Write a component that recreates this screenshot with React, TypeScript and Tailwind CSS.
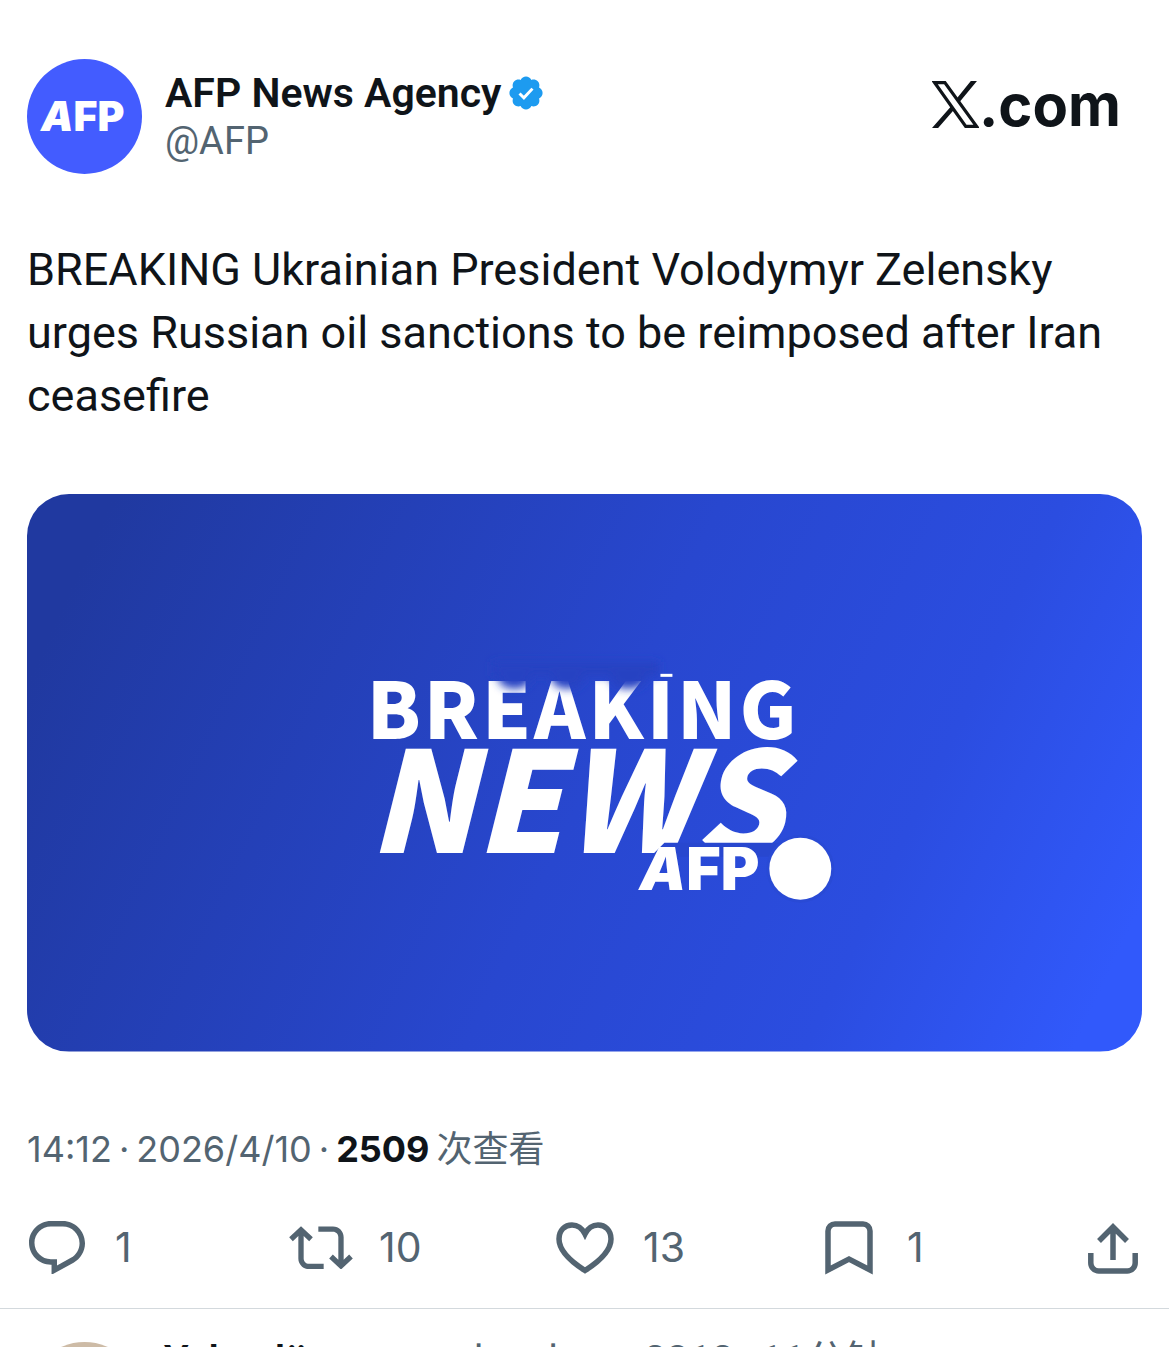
import { ReactNode } from "react";

interface ActionProps {
  label: string;
  count?: string;
  children: ReactNode;
}

export default function App() {
  return (
    <main className="h-screen overflow-hidden bg-white font-['Roboto','Noto_Sans_CJK_SC',sans-serif] text-[#0f1419]">
      <article className="border-b border-[#d3d9dd] pb-7">
        <div className="px-[27px]">
          <PostHeader />
          <p className="mt-16 text-[45px] leading-[63px]">
            BREAKING Ukrainian President Volodymyr Zelensky urges Russian oil
            sanctions to be reimposed after Iran ceasefire
          </p>
          <BreakingCard />
          <PostMeta />
        </div>
        <PostActions />
      </article>
      <Reply />
    </main>
  );
}

function PostHeader() {
  return (
    <header className="flex items-center pt-[59px]">
      <svg
        viewBox="0 0 115 115"
        className="w-[115px] shrink-0 font-['Inter',sans-serif]"
        role="img"
        aria-label="AFP"
      >
        <circle cx="57.5" cy="57.5" r="57.5" fill="#435cff" />
        <text x="14" y="72" fontSize="41" fontWeight="900" fill="#fff">
          <tspan fontStyle="italic">A</tspan>FP
        </text>
      </svg>
      <div className="ml-[23px] leading-[48px]">
        <div className="flex items-center gap-2">
          <h1 className="text-[41px] font-semibold">AFP News Agency</h1>
          <VerifiedBadge />
        </div>
        <div className="text-[38px] text-[#536471]">@AFP</div>
      </div>
      <a
        href="#"
        className="mr-[21px] ml-auto -mt-6 flex items-center font-['Inter',sans-serif] text-[58px] leading-[60px] font-bold"
      >
        <svg viewBox="0 0 46 46" className="w-[47px]" aria-label="X">
          <path
            d="M2.6 1.6h10l31 42.8H33z"
            fill="none"
            stroke="currentColor"
            strokeWidth="3.2"
          />
          <path
            d="M38 0h6L27 20.500l-2.600-3.500zM18.500 25l2.600 3.700L6 46H0z"
            fill="currentColor"
          />
        </svg>
        .com
      </a>
    </header>
  );
}

function VerifiedBadge() {
  return (
    <svg viewBox="1.5 1.500 21 21" className="w-[34px]" aria-label="Verified">
      <path
        fill="#1d9bf0"
        d="M22.250 12c0-1.430-.88-2.670-2.190-3.340.46-1.390.2-2.900-.81-3.910s-2.520-1.270-3.910-.81c-.66-1.310-1.910-2.190-3.340-2.190s-2.670.88-3.330 2.190c-1.400-.46-2.910-.2-3.920.81s-1.260 2.520-.8 3.910c-1.310.67-2.200 1.910-2.200 3.340s.89 2.670 2.200 3.340c-.46 1.390-.21 2.900.8 3.910s2.520 1.260 3.910.81c.67 1.310 1.910 2.190 3.340 2.190s2.680-.88 3.340-2.190c1.390.45 2.900.2 3.910-.81s1.270-2.520.81-3.910c1.310-.67 2.190-1.910 2.190-3.340z"
      />
      <path
        d="M8 12.300l2.700 2.700 5.300-5.700"
        fill="none"
        stroke="#fff"
        strokeWidth="1.8"
      />
    </svg>
  );
}

function BreakingCard() {
  return (
    <svg
      viewBox="0 0 1116 558"
      className="mt-[67px] w-full rounded-[42px] font-['Noto_Sans_CJK_SC',sans-serif]"
      role="img"
      aria-label="Breaking news AFP"
    >
      <defs>
        <linearGradient
          id="card"
          gradientUnits="userSpaceOnUse"
          x1="60"
          y1="60"
          x2="1060"
          y2="530"
        >
          <stop offset="0" stopColor="#2039a0" />
          <stop offset="0.5" stopColor="#2847cf" />
          <stop offset="0.78" stopColor="#2b4de0" />
          <stop offset="1" stopColor="#3159fb" />
        </linearGradient>
        <filter id="soft" x="-30%" y="-60%" width="160%" height="220%">
          <feGaussianBlur stdDeviation="4" />
        </filter>
      </defs>
      <rect width="1116" height="558" fill="url(#card)" />
      <text
        x="340"
        y="245"
        fontSize="78"
        fontWeight="900"
        fill="#fff"
        className="tracking-[3px]"
      >
        BREAKING
      </text>
      <g fill="#2542c2" filter="url(#soft)">
        <rect x="466" y="168" width="166" height="14" />
        <ellipse cx="488" cy="185" rx="16" ry="10" />
        <ellipse cx="541" cy="185" rx="16" ry="10" />
        <ellipse cx="602" cy="185" rx="18" ry="10" />
      </g>
      <rect x="634" y="180" width="12" height="3" fill="#fff" />
      <text
        x="341"
        y="359"
        fontSize="140"
        fontWeight="900"
        fontStyle="italic"
        fill="#fff"
      >
        NEWS
      </text>
      <path d="M626 361l12-12h120v14H624z" fill="#2847cf" />
      <circle cx="774" cy="375" r="34" fill="#294ad5" />
      <circle cx="774" cy="375" r="31" fill="#fff" />
      <text
        x="613"
        y="396"
        fontSize="59"
        fontWeight="900"
        fill="#fff"
        className="font-['Inter',sans-serif]"
      >
        <tspan fontStyle="italic">A</tspan>FP
      </text>
    </svg>
  );
}

function PostMeta() {
  return (
    <div className="mt-[73px] flex gap-[7px] font-['Inter','Noto_Sans_CJK_SC',sans-serif] text-[36px] leading-[48px] text-[#536471]">
      <time>14:12</time>
      <span>·</span>
      <time>2026/4/10</time>
      <span>·</span>
      <strong className="font-bold text-[#0f1419]">2509</strong>
      <span>次查看</span>
    </div>
  );
}

function PostActions() {
  return (
    <div className="mt-[43px] flex pr-6 pl-[25px]">
      <Action label="Reply" count="1">
        <svg viewBox="1.75 2 20.5 19.7" className="w-14" fill="currentColor">
          <path d="M1.751 10c0-4.42 3.584-8 8.005-8h4.366c4.49 0 8.129 3.64 8.129 8.13 0 2.96-1.607 5.68-4.196 7.11l-8.054 4.46v-3.69h-.067c-4.49.1-8.183-3.51-8.183-8.01zm8.005-6c-3.317 0-6.005 2.69-6.005 6 0 3.37 2.77 6.08 6.138 6.01l.351-.01h1.761v2.3l5.087-2.81c1.951-1.08 3.163-3.13 3.163-5.36 0-3.39-2.744-6.13-6.129-6.13H9.756z" />
        </svg>
      </Action>
      <Action label="Repost" count="10">
        <svg viewBox="0 3.8 24 16.4" className="w-16" fill="currentColor">
          <path d="M4.5 3.88l4.432 4.14-1.364 1.46L5.5 7.55V16c0 1.1.896 2 2 2H13v2H7.5c-2.209 0-4-1.79-4-4V7.55L1.432 9.48.068 8.02 4.5 3.88zM16.5 6H11V4h5.5c2.209 0 4 1.79 4 4v8.45l2.068-1.93 1.364 1.46-4.432 4.14-4.432-4.14 1.364-1.46 2.068 1.93V8c0-1.1-.896-2-2-2z" />
        </svg>
      </Action>
      <Action label="Like" count="13">
        <svg
          viewBox="0 0 58 52"
          className="w-[58px]"
          fill="none"
          stroke="currentColor"
          strokeWidth="5.500"
        >
          <path d="M29 48.500C14 39 3 28 3 17 3 8 9 3 16 3c6 0 10 3 13 9 3-6 7-9 13-9 7 0 13 5 13 14 0 11-11 22-26 31.500z" />
        </svg>
      </Action>
      <Action label="Bookmark" count="1">
        <svg
          viewBox="0 0 48 54"
          className="w-12"
          fill="none"
          stroke="currentColor"
          strokeWidth="5.500"
        >
          <path d="M3 49V10a7 7 0 0 1 7-7h28a7 7 0 0 1 7 7v39L24 38z" />
        </svg>
      </Action>
      <Action label="Share">
        <svg
          viewBox="0 0 50 52"
          className="w-[50px]"
          fill="none"
          stroke="currentColor"
          strokeWidth="5.500"
        >
          <path d="M25 38V5M11 19L25 5l14 14M2.800 31v10a8 8 0 0 0 8 8h28.400a8 8 0 0 0 8-8V31" />
        </svg>
      </Action>
    </div>
  );
}

function Action({ label, count, children }: ActionProps) {
  return (
    <div className={count ? "flex-1" : ""}>
      <button
        type="button"
        aria-label={label}
        className="flex h-16 items-center gap-[26px] font-['Inter',sans-serif] text-[41px] text-[#536471]"
      >
        <span className="flex w-16 justify-center">{children}</span>
        {count && <span>{count}</span>}
      </button>
    </div>
  );
}

function Reply() {
  return (
    <section className="flex px-[27px] pt-[33px]">
      <div className="size-[115px] shrink-0 rounded-full bg-[#cdbba6]"></div>
      <div className="-mt-1 ml-[22px] flex text-[40px] leading-[45px] whitespace-nowrap text-[#536471]">
        <strong className="font-semibold text-[#0f1419]">Yakonlü</strong>
        <span className="ml-8">seurranlcoelensu2312</span>
        <span className="ml-2">·</span>
        <span className="ml-2">11分钟</span>
      </div>
    </section>
  );
}
